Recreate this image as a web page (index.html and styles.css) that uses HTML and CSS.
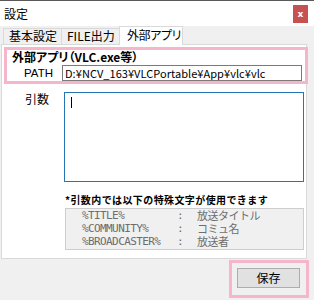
FILE: index.html
```html
<!DOCTYPE html>
<html lang="ja">
<head>
    <meta charset="UTF-8">
    <title>設定</title>
    <link rel="stylesheet" href="styles.css">
</head>
<body>
    <div class="window">
        <!-- Title bar -->
        <div class="titlebar">
            <span class="title">設定</span>
            <span class="close">x</span>
        </div>

        <!-- Tabs -->
        <div class="tabs">
            <div class="tab">基本設定</div>
            <div class="tab">FILE出力</div>
            <div class="tab active">外部アプリ</div>
        </div>

        <div class="panel">
            <div class="app-box">
                <div class="app-title">外部アプリ（VLC.exe等）</div>
                <div class="row">
                    <label class="label path-label" for="path">PATH</label>
                    <input class="path-input" id="path" type="text" value="D:¥NCV_163¥VLCPortable¥App¥vlc¥vlc">
                </div>
            </div>

            <div class="row args-row">
                <label class="label" for="args">引数</label>
                <div class="args-box" id="args"><span class="caret"></span></div>
            </div>

            <div class="note">*引数内では以下の特殊文字が使用できます</div>

            <div class="vars">
                <span class="var-name">%TITLE%</span><span class="var-sep">:</span><span class="var-value">放送タイトル</span>
                <span class="var-name">%COMMUNITY%</span><span class="var-sep">:</span><span class="var-value">コミュ名</span>
                <span class="var-name">%BROADCASTER%</span><span class="var-sep">:</span><span class="var-value">放送者</span>
            </div>
        </div>

        <div class="footer">
            <div class="save-box">
                <button class="save-btn">保存</button>
            </div>
        </div>
    </div>
</body>
</html>
```

FILE: styles.css
```css
/* Reset */
* {
    margin: 0;
    padding: 0;
    box-sizing: border-box;
}

body {
    font-family: "Noto Sans CJK JP", "Noto Sans", sans-serif;
    font-size: 12px;
    color: #000;
    background: #f0f0f0;
    width: 314px;
    height: 300px;
    overflow: hidden;
}

.window {
    display: flex;
    flex-direction: column;
    height: 300px;
    background: #f0f0f0;
}

/* Title bar */
.titlebar {
    height: 26px;
    background: #fff;
    border-top: 1px solid #5a5a5a;
    display: flex;
    align-items: center;
    justify-content: space-between;
    padding: 0 6px 0 4px;
}

.title {
    font-size: 12px;
    line-height: 14px;
}

.close {
    width: 15px;
    height: 18px;
    background: #c75050;
    color: #fff;
    font-family: "DejaVu Sans", sans-serif;
    font-weight: bold;
    font-size: 9px;
    display: flex;
    align-items: center;
    justify-content: center;
}

/* Tabs */
.tabs {
    display: flex;
    align-items: flex-end;
    height: 18px;
    padding-left: 3px;
    position: relative;
    z-index: 1;
}

.tab {
    height: 16px;
    padding: 0 0 0 5px;
    border: 1px solid #d9d9d9;
    border-bottom: none;
    border-right: none;
    line-height: 14px;
    background: #f0f0f0;
    white-space: nowrap;
    overflow: hidden;
}

.tab:nth-child(1) { width: 58px; }
.tab:nth-child(2) { width: 58px; }

.tab.active {
    width: 64px;
    height: 19px;
    margin-bottom: -1px;
    background: #fff;
    border-right: 1px solid #d9d9d9;
    padding-left: 7px;
    line-height: 16px;
    font-feature-settings: "palt";
    letter-spacing: -0.4px;
}

/* Panel */
.panel {
    height: 215px;
    margin: 0 7px 0 1px;
    background: #fff;
    border: 1px solid #d9d9d9;
    padding: 2px 0 0 2px;
}

.app-box {
    height: 37px;
    margin-right: -2px;
    border: 3px solid #f5b6cb;
}

.app-title {
    font-weight: bold;
    font-size: 12px;
    line-height: 13px;
    padding-left: 5px;
    font-feature-settings: "palt";
}

.row {
    display: flex;
    align-items: flex-start;
}

.app-box .row {
    margin-top: 2px;
}

.label {
    width: 55px;
    padding-left: 17px;
    font-size: 12px;
    line-height: 16px;
}

.path-label {
    font-family: "Liberation Sans", sans-serif;
    font-size: 11.5px;
}

.path-input {
    width: 240px;
    height: 16px;
    border: 1px solid #7a7a7a;
    padding: 0 2px;
    font-family: "Noto Sans CJK JP", sans-serif;
    font-size: 11px;
    line-height: 14px;
    outline: none;
    letter-spacing: 0.05px;
}

.args-row {
    margin-top: 8px;
}

.args-row .label {
    width: 60px;
    padding-left: 21px;
    line-height: 13px;
}

.args-box {
    width: 240px;
    height: 90px;
    border: 1px solid #2574b3;
    padding: 4px 0 0 6px;
}

.caret {
    display: block;
    width: 1px;
    height: 11px;
    background: #000;
}

.note {
    margin: 11px 0 0 61px;
    font-weight: bold;
    font-size: 10px;
    line-height: 14px;
    letter-spacing: 0.4px;
}

.vars {
    width: 239px;
    height: 42px;
    margin: 1px 0 0 61px;
    background: #f0f0f0;
    border: 1px solid #cdcdcd;
    padding: 0 0 0 16px;
    display: grid;
    grid-template-columns: 95px 20px auto;
    grid-auto-rows: 13px;
    color: #6d6d6d;
}

.var-name,
.var-sep {
    font-family: "DejaVu Sans Mono", monospace;
    font-size: 11px;
    line-height: 13px;
    letter-spacing: -0.6px;
}

.var-value {
    font-size: 11px;
    line-height: 13px;
    letter-spacing: -0.5px;
}

/* Footer */
.footer {
    display: flex;
    justify-content: flex-end;
    padding: 1px 5px 0 0;
}

.save-box {
    width: 80px;
    height: 38px;
    border: 3px solid #f5b6cb;
    padding: 5px 6px 0 5px;
}

.save-btn {
    width: 63px;
    height: 20px;
    background: #e1e1e1;
    border: 1px solid #adadad;
    font-family: "Noto Sans CJK JP", sans-serif;
    font-size: 12px;
    line-height: 16px;
    color: #000;
}
```
